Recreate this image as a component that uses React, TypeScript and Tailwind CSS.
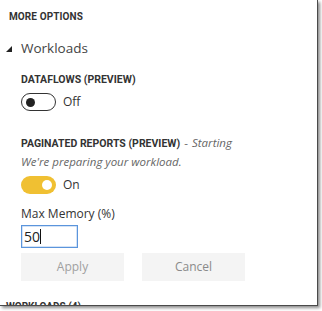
import React from "react";

export default function App() {
  return (
    <div className="w-[322px] h-[311px] bg-white relative overflow-hidden">
      <div
        className="w-[318px] h-[306px] bg-white border-r border-b border-[#4a4a4a] overflow-hidden"
        style={{ boxShadow: "2px 2px 3px rgba(0,0,0,0.45)" }}
      >
        <div className="pl-[9px] pt-[9px] h-[35px] leading-[15px] text-[10px] font-bold text-[#333] tracking-[0.1px] [font-family:Roboto,sans-serif]">
          MORE OPTIONS
        </div>
        <div className="flex items-center h-[26px] pl-[6px]">
          <svg width="6" height="6" viewBox="0 0 6 6" className="mt-[1px]">
            <polygon points="0,6 6,0 6,6" fill="#222" />
          </svg>
          <span className="ml-[9px] text-[13.5px] text-[#444] [font-family:'Open_Sans',sans-serif]">Workloads</span>
        </div>
        <div className="pl-[21px] mt-[14px] h-[10px] leading-[10px] text-[10.5px] font-bold text-[#333] [font-family:Roboto,sans-serif]">
          DATAFLOWS (PREVIEW)
        </div>
        <div className="pl-[21px] mt-[8px] flex items-center h-[18px]">
          <div className="w-[35px] h-[18px] rounded-full border border-[#333] flex items-center pl-[4px]">
            <div className="w-[9px] h-[9px] rounded-full bg-[#222]" />
          </div>
          <span className="ml-[7px] text-[12px] text-[#333] [font-family:'Open_Sans',sans-serif]">Off</span>
        </div>
        <div className="pl-[21px] mt-[26px] h-[12px] leading-[12px] flex items-baseline whitespace-nowrap">
          <span className="text-[10.5px] font-bold text-[#333] [font-family:Roboto,sans-serif]">PAGINATED REPORTS (PREVIEW)</span>
          <span className="ml-[4px] text-[11.5px] text-[#666] [font-family:'Open_Sans',sans-serif]">-</span>
          <span className="ml-[4px] text-[11.5px] italic text-[#666] [font-family:'Open_Sans',sans-serif]">Starting</span>
        </div>
        <div className="pl-[21px] mt-[6px] h-[14px] leading-[14px] text-[11.5px] italic text-[#666] [font-family:'Open_Sans',sans-serif]">
          We're preparing your workload.
        </div>
        <div className="pl-[21px] mt-[7px] flex items-center h-[18px]">
          <div className="w-[35px] h-[18px] rounded-full bg-[#f0c032] flex items-center justify-end pr-[4px]">
            <div className="w-[10px] h-[10px] rounded-full bg-white" />
          </div>
          <span className="ml-[7px] text-[12px] text-[#333] [font-family:'Open_Sans',sans-serif]">On</span>
        </div>
        <div className="pl-[21px] mt-[12px] h-[16px] leading-[16px] text-[12px] text-[#333] [font-family:'Open_Sans',sans-serif]">
          Max Memory (%)
        </div>
        <div className="pl-[21px] mt-[3px]">
          <div className="w-[57px] h-[23px] border border-[#5b95dc] flex items-center pl-[2px] shadow-[inset_0_0_0_0.5px_#a9c8ee]">
            <span className="text-[14px] text-[#222] [font-family:'Open_Sans',sans-serif] leading-none">50</span>
            <span className="w-[1px] h-[15px] bg-[#111]" />
          </div>
        </div>
        <div className="pl-[21px] mt-[5px] flex gap-[18px]">
          <div className="w-[103px] h-[28px] bg-[#f4f4f4] flex items-center justify-center text-[12px] text-[#a0a0a0] [font-family:'Open_Sans',sans-serif]">
            Apply
          </div>
          <div className="w-[103px] h-[28px] bg-[#f4f4f4] flex items-center justify-center text-[12px] text-[#8a8a8a] [font-family:'Open_Sans',sans-serif]">
            Cancel
          </div>
        </div>
        <div className="pl-[6px] mt-[21px] text-[10px] leading-[10px] font-bold text-[#333] [font-family:Roboto,sans-serif] whitespace-nowrap">
          WORKLOADS (4)
        </div>
      </div>
    </div>
  );
}
